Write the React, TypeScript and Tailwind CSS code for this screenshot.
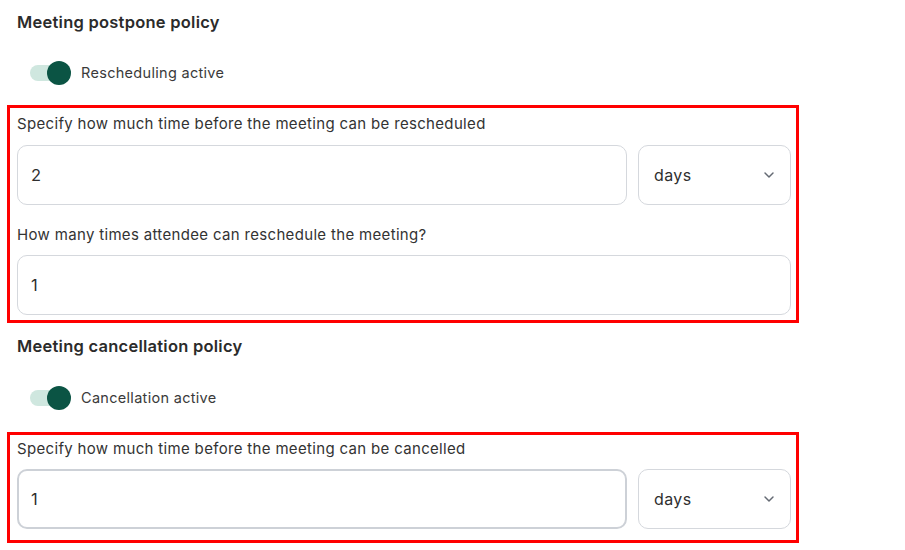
import { ChevronDown } from "lucide-react";

const Toggle = ({ label }: { label: string }) => {
	return (
		<div className="flex items-center h-[24px] ml-[23px]">
			<div className="relative w-[41px] h-[24px] flex items-center">
				<div className="w-[34px] h-[16px] rounded-full bg-[#cfe7df]" />
				<div className="absolute left-[17px] top-0 w-[24px] h-[24px] rounded-full bg-[#0b5444]" />
			</div>
			<span className="ml-[10px] text-[14.5px] tracking-[0.3px] text-[#3a3a3a]">
				{label}
			</span>
		</div>
	);
};

const Field = ({ value, thick }: { value: string; thick?: boolean }) => {
	return (
		<div
			className={
				thick
					? "flex-1 h-[60px] rounded-[10px] border-2 border-[#cdd1d7] flex items-center pl-[12px] text-[16.5px] text-[#2f2f2f]"
					: "flex-1 h-[60px] rounded-[10px] border border-[#d5d8dd] flex items-center pl-[13px] text-[16.5px] text-[#2f2f2f]"
			}
		>
			{value}
		</div>
	);
};

const Select = () => {
	return (
		<div className="w-[153px] h-[60px] rounded-[10px] border border-[#d5d8dd] flex items-center justify-between pl-[15px] pr-[13px] text-[16px] tracking-[0.4px] text-[#2f2f2f]">
			<span>days</span>
			<ChevronDown size={16} strokeWidth={2.2} className="text-[#646a73]" />
		</div>
	);
};

export default function App() {
	return (
		<div
			className="w-[905px] h-[550px] bg-white pl-[7px] pt-[10px] text-[#333]"
			style={{ fontFamily: "Inter, 'Noto Sans', sans-serif" }}
		>
			<h2 className="ml-[10px] text-[16.5px] tracking-[0.25px] font-semibold leading-[24px] text-[#2b2b2b]">
				Meeting postpone policy
			</h2>
			<div className="mt-[27px]">
				<Toggle label="Rescheduling active" />
			</div>
			<div className="mt-[20px] w-[792px] border-[3px] border-[#ff0000] pl-[7px] pr-[5px] pt-[6px] pb-[5px]">
				<div className="text-[15px] tracking-[0.33px] leading-[20px] text-[#333]">
					Specify how much time before the meeting can be rescheduled
				</div>
				<div className="mt-[11px] flex gap-[11px]">
					<Field value="2" />
					<Select />
				</div>
				<div className="mt-[20px] text-[15px] tracking-[0.33px] leading-[20px] text-[#333]">
					How many times attendee can reschedule the meeting?
				</div>
				<div className="mt-[10px] flex">
					<Field value="1" />
				</div>
			</div>
			<h2 className="mt-[11px] ml-[10px] text-[16.5px] tracking-[0.25px] font-semibold leading-[24px] text-[#2b2b2b]">
				Meeting cancellation policy
			</h2>
			<div className="mt-[28px]">
				<Toggle label="Cancellation active" />
			</div>
			<div className="mt-[22px] w-[792px] border-[3px] border-[#ff0000] pl-[7px] pr-[5px] pt-[4px] pb-[11px]">
				<div className="text-[15px] tracking-[0.33px] leading-[20px] text-[#333]">
					Specify how much time before the meeting can be cancelled
				</div>
				<div className="mt-[10px] flex gap-[11px]">
					<Field value="1" thick />
					<Select />
				</div>
			</div>
		</div>
	);
}
